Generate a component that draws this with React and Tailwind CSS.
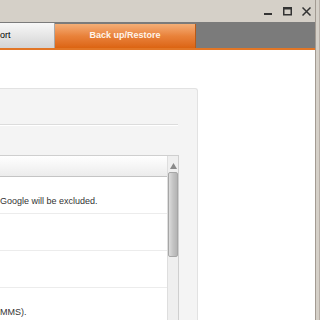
export default function App() {
  const rows = [
    "Google will be excluded.",
    "",
    "",
    "MMS).",
  ];

  return (
    <div className="w-[320px] h-[320px] overflow-hidden flex bg-white" style={{ fontFamily: '"Liberation Sans", Arial, sans-serif' }}>
      <div className="flex-1 flex flex-col min-w-0">
        {/* title bar */}
        <div className="h-[22px] shrink-0 bg-[#d5d0c8] flex items-center justify-end gap-[10px] pr-[4px]">
          <svg width="9" height="9" viewBox="0 0 9 9" className="mt-[1px]">
            <rect x="0" y="6" width="8" height="2" fill="#333" />
          </svg>
          <svg width="9" height="9" viewBox="0 0 9 9">
            <rect x="0.75" y="0.75" width="7.5" height="7" fill="none" stroke="#333" strokeWidth="1.5" />
            <rect x="0" y="0" width="9" height="2.5" fill="#333" />
          </svg>
          <svg width="9" height="9" viewBox="0 0 9 9">
            <path d="M0.5 0.5 L8.5 8.5 M8.5 0.5 L0.5 8.5" stroke="#333" strokeWidth="1.5" />
          </svg>
        </div>
        {/* tabs */}
        <div className="h-[26px] shrink-0 bg-[#7b7b7b] flex items-end">
          <div className="w-[55px] h-[25px] bg-gradient-to-b from-[#f8f8f8] to-[#d4d4d4] border-r border-[#a8a8a8] flex items-center text-[9px] text-black">
            ort
          </div>
          <div className="w-[141px] h-[24px] bg-gradient-to-b from-[#f4ae76] via-[#e9823a] to-[#dc6410] flex items-center justify-center text-[9px] font-bold text-[#fff4ea] border-r border-[#b85a18]">
            Back up/Restore
          </div>
        </div>
        <div className="h-[2px] shrink-0 bg-[#e27626]" />
        {/* content */}
        <div className="flex-1 min-h-0 overflow-hidden flex flex-col pt-[38px]">
          <div className="w-[198px] flex-1 bg-[#f4f4f4] border-t border-r border-[#e2e2e2] rounded-tr-[3px] flex flex-col">
            <div className="h-[36px] shrink-0 border-b border-[#dcdcdc] w-[178px]" />
            <div className="h-px shrink-0 w-[178px] bg-white" />
            <div className="mt-[29px] w-[179px] flex-1 bg-white border-t border-r border-[#cfcfcf] flex">
              <div className="flex-1 flex flex-col">
                <div className="h-[21px] shrink-0 bg-gradient-to-b from-white to-[#ececec] border-b border-[#c4c4c4]" />
                {rows.map((r, i) => (
                  <div key={i} className="h-[37px] shrink-0 border-b border-[#ececec] flex items-center pt-[14px] text-[9px] text-[#333]">
                    {r}
                  </div>
                ))}
              </div>
              <div className="w-[11px] bg-[#efefef] border-l border-[#dedede] flex flex-col items-center">
                <svg width="7" height="6" viewBox="0 0 7 6" className="mt-[7px]">
                  <path d="M3.5 0 L7 6 L0 6 Z" fill="#8a8a8a" />
                </svg>
                <div className="mt-[3px] w-[10px] h-[85px] rounded-[2px] border border-[#a6a6a6] bg-gradient-to-r from-[#dcdcdc] via-[#c4c4c4] to-[#b4b4b4]" />
              </div>
            </div>
          </div>
        </div>
      </div>
      {/* window frame */}
      <div className="w-[5px] flex">
        <div className="w-px bg-[#a39b92]" />
        <div className="flex-1 bg-[#d5d0c8]" />
        <div className="w-px bg-[#b8b0a8]" />
      </div>
    </div>
  );
}
